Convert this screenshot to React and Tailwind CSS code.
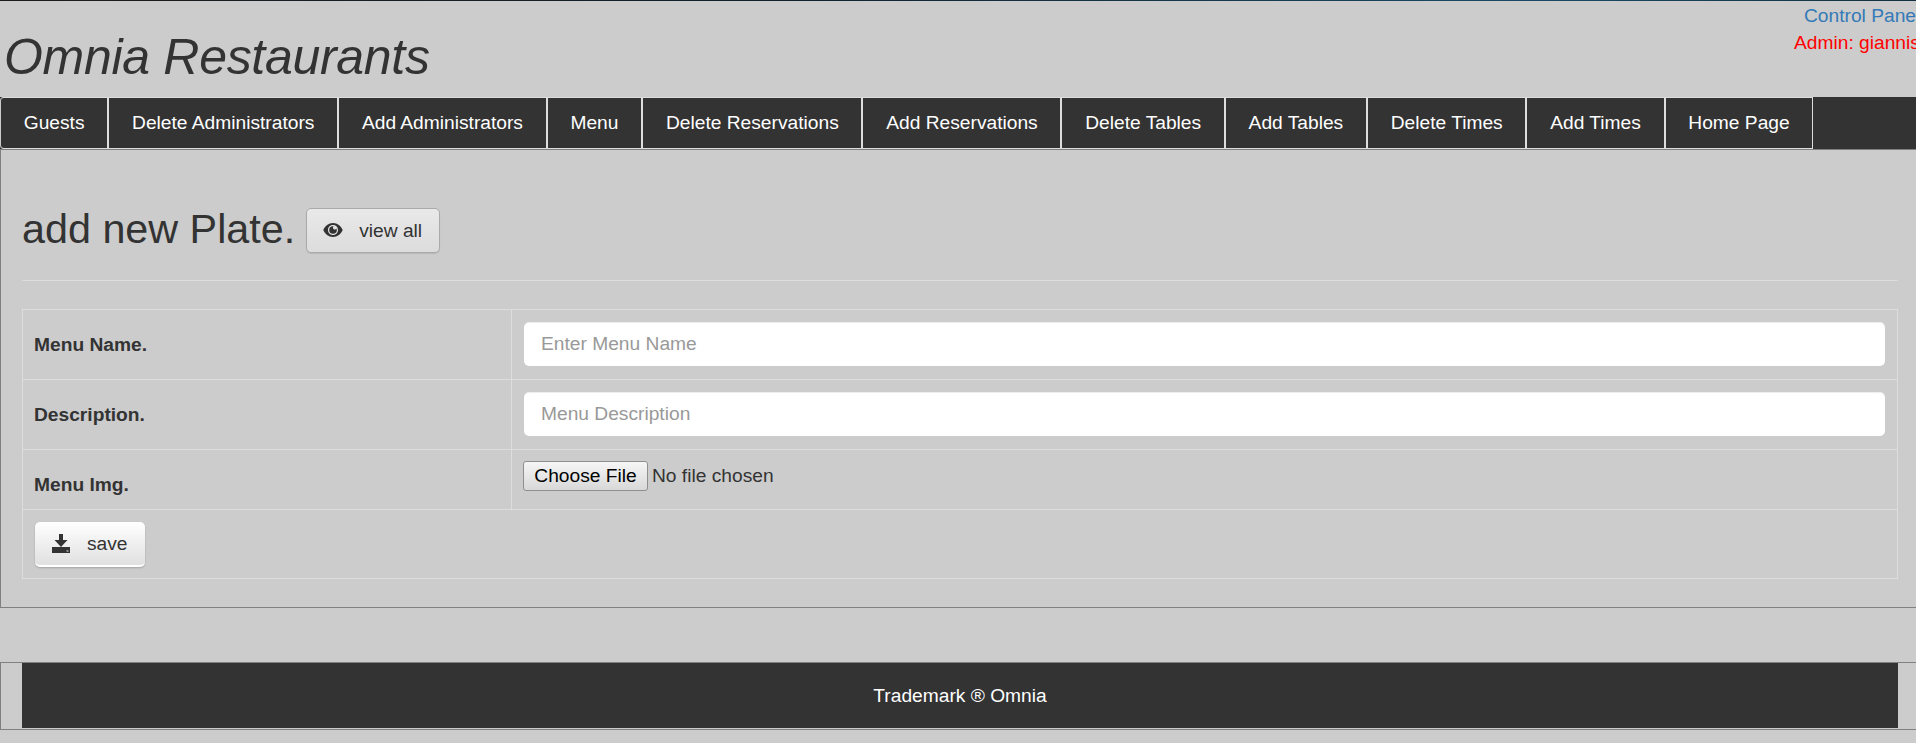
import React from "react";

const NAV = [
  "Guests",
  "Delete Administrators",
  "Add Administrators",
  "Menu",
  "Delete Reservations",
  "Add Reservations",
  "Delete Tables",
  "Add Tables",
  "Delete Times",
  "Add Times",
  "Home Page",
];

function Eye() {
  return (
    <svg width="20" height="16" viewBox="0 0 20 16" className="block shrink-0 -mt-[2px]">
      <path fillRule="evenodd" fill="#333" d="M10 1C5.500 1 2 4.200 .3 8c1.700 3.800 5.200 7 9.700 7s8-3.200 9.700-7C18 4.200 14.500 1 10 1zm0 2c3 0 5 2.200 5 5s-2 5-5 5-5-2.200-5-5 2-5 5-5z" />
      <path fillRule="evenodd" fill="#333" d="M10 4.200A3.800 3.800 0 1 0 13.800 8c0-.5-.1-1-.3-1.400-.3.600-.9 1-1.600 1-1.100 0-1.900-.8-1.900-1.900 0-.6.200-1.100.6-1.500H10z" />
    </svg>
  );
}

function Save() {
  return (
    <svg width="18" height="19" viewBox="0 0 18 19" className="block shrink-0">
      <path fill="#333" d="M7 0h4v6h4.500L9 13 2.500 6H7z" />
      <path fillRule="evenodd" fill="#333" d="M0 13h18v6H0zm14.500 3.500v1h2v-1z" />
    </svg>
  );
}

export default function App() {
  return (
    <div className="w-[1916px] h-[743px] overflow-hidden bg-[#cccccc] text-[#333333] font-['Liberation_Sans',Arial,sans-serif] text-[19.2px] leading-[24px]">
      <div className="h-px bg-[linear-gradient(90deg,#1c1c1c,#10202c_40%,#1a4a66_80%,#12303f)]" />
      <header className="h-[96px] flex justify-between">
        <h1 className="pl-[4px] pt-[29px] text-[50px] leading-[55px] italic font-normal tracking-[-0.3px]">Omnia Restaurants</h1>
        <div className="w-[122px] shrink-0 overflow-hidden pt-[3px] whitespace-nowrap">
          <div className="pl-[10px] text-[#337ab7] h-[27px]">Control Panel</div>
          <div className="text-[#ff0000]">Admin: giannis</div>
        </div>
      </header>
      <nav className="h-[52px] bg-[#333333] flex text-white">
        {NAV.map((n) => (
          <a key={n} className="h-[52px] px-[22.75px] flex items-center border border-[#dddddd] first:border-l-[#cccccc] first:rounded-l-[4px] whitespace-nowrap">{n}</a>
        ))}
      </nav>
      <main className="h-[459px] border-t border-l border-b border-[#808080] pl-[21px] pr-[18px]">
        <div className="h-[131px] border-b border-[#dddddd] flex items-start pt-[58px]">
          <h2 className="-mt-[2px] text-[41.3px] leading-[46px] font-normal">add new Plate.</h2>
          <button className="ml-[11px] w-[134px] h-[45px] rounded-[5px] border border-[#aaaaaa] bg-gradient-to-b from-[#e9e9e9] to-[#dcdcdc] flex items-center pl-[16px] shadow-[0_1px_1px_rgba(0,0,0,0.1)]">
            <Eye />
            <span className="ml-[16px]">view all</span>
          </button>
        </div>
        <table className="mt-[28px] w-full border-collapse border border-[#dddddd] table-fixed">
          <colgroup>
            <col className="w-[489px]" />
            <col />
          </colgroup>
          <tbody>
            <tr className="h-[70px]">
              <td className="border border-[#dddddd] px-[11px] font-bold">Menu Name.</td>
              <td className="border border-[#dddddd] px-[12px]">
                <input placeholder="Enter Menu Name" className="block w-full h-[44px] mb-[2px] rounded-[5px] bg-white px-[17px] placeholder:text-[#999999] outline-none shadow-[inset_0_1px_1px_rgba(0,0,0,0.075)]" />
              </td>
            </tr>
            <tr className="h-[70px]">
              <td className="border border-[#dddddd] px-[11px] font-bold">Description.</td>
              <td className="border border-[#dddddd] px-[12px]">
                <input placeholder="Menu Description" className="block w-full h-[44px] mb-[2px] rounded-[5px] bg-white px-[17px] placeholder:text-[#999999] outline-none shadow-[inset_0_1px_1px_rgba(0,0,0,0.075)]" />
              </td>
            </tr>
            <tr className="h-[60px]">
              <td className="border border-[#dddddd] px-[11px] font-bold align-bottom pb-[12px]">Menu Img.</td>
              <td className="border border-[#dddddd] pl-[11px] pr-[12px] align-top pt-[11px]">
                <input type="file" className="block text-[#333] file:h-[30px] file:w-[125px] file:mr-[4px] file:border file:border-[#8f8f8f] file:rounded-[3px] file:bg-[linear-gradient(#f6f6f6,#d8d8d8)] file:text-black file:text-[19.2px] file:font-['Liberation_Sans',Arial,sans-serif]" />
              </td>
            </tr>
            <tr className="h-[69px]">
              <td colSpan={2} className="border border-[#dddddd] px-[12px]">
                <button className="w-[110px] h-[45px] rounded-[5px] bg-gradient-to-b from-white to-[#e0e0e0] flex items-center pl-[17px] border-b-2 border-white shadow-[0_1px_2px_rgba(0,0,0,0.2)]">
                  <Save />
                  <span className="ml-[17px] pt-[2px]">save</span>
                </button>
              </td>
            </tr>
          </tbody>
        </table>
      </main>
      <footer className="mt-[54px] h-[68px] border-y border-l border-[#808080] pl-[21px] pr-[18px] pb-px">
        <div className="h-full bg-[#333333] text-white flex items-center justify-center">Trademark ® Omnia</div>
      </footer>
    </div>
  );
}
